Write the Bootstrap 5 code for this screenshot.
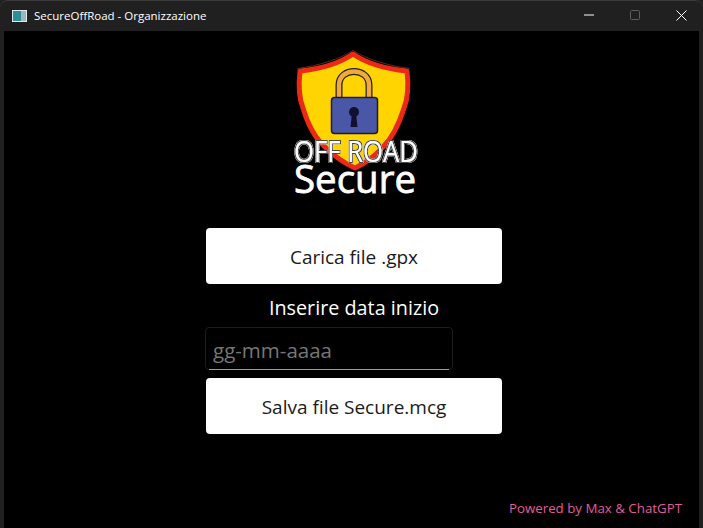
<!DOCTYPE html>
<html lang="it">
<head>
<meta charset="utf-8">
<title>SecureOffRoad - Organizzazione</title>
<link href="https://cdn.jsdelivr.net/npm/bootstrap@5.3.0/dist/css/bootstrap.min.css" rel="stylesheet">
<style>
html, body { height: 100%; }
body { background: #202020; font-family: "Open Sans", "Noto Sans", sans-serif; overflow: hidden; }
.win-shell { height: 528px; width: 703px; }
.title-strip { height: 31px; background: #202020; color: #fff; font-size: 11.5px; padding-left: 12px; border-top: 1px solid #3a3a3a; border-radius: 8px 8px 0 0; }
.app-glyph { width: 15px; height: 12px; margin-right: 7px; }
.caption-btn { width: 46px; height: 30px; padding-bottom: 2px; }
.caption-group { margin-right: -1px; }
.client-area { background: #000; margin: 0 4px 0 4px; height: 497px; position: relative; }
.logo-box { width: 134px; height: 158px; margin-top: 17px; margin-left: 11px; }
.logo-text { font-family: "Open Sans", sans-serif; fill: #fff; }
.logo-word { stroke: #fff; stroke-width: .8px; }
.action-btn { width: 296px; height: 56px; background: #fff; color: #1a1a1a; border: 0; border-radius: 4px; font-size: 19px; padding: 3px 0 0; }
.action-btn:hover { background: #fff; color: #1a1a1a; }
.field-label { color: #fff; font-size: 19.8px; line-height: 25px; margin-top: 11px; margin-bottom: 7px; }
.stack-col { width: 296px; margin-left: 202px; margin-top: 22px; }
.date-field.form-control { width: 248px; height: 43px; background: #000; color: #fff; border: 1px solid #1c1c1c; border-radius: 4px; font-size: 20.5px; padding: 3px 7px 0; margin-left: -1px; margin-bottom: 8px; font-family: inherit; box-shadow: none; }
.date-field.form-control::placeholder { color: #767676; opacity: 1; }
.field-wrap { position: relative; align-self: flex-start; }
.field-wrap::after { content: ""; position: absolute; left: 3px; right: 4px; bottom: 8px; height: 1px; background: #9a9a9a; }
.credit-line { color: #e25c9d; font-size: 13.3px; position: absolute; right: 17px; bottom: 11px; line-height: 18px; }
</style>
</head>
<body>
<div class="win-shell d-flex flex-column">
  <div class="title-strip d-flex align-items-center">
    <svg class="app-glyph" viewBox="0 0 15 12"><rect width="15" height="12" fill="#dfe8ec"/><rect x="1" y="1" width="8" height="10" fill="#2f8f96"/><rect x="9" y="1" width="5" height="10" fill="#9fb4bb"/></svg>
    <span>SecureOffRoad - Organizzazione</span>
    <div class="caption-group ms-auto d-flex">
      <div class="caption-btn d-flex align-items-center justify-content-center"><svg width="10" height="10" viewBox="0 0 10 10"><path d="M0 5h10" stroke="#fff" fill="none"/></svg></div>
      <div class="caption-btn d-flex align-items-center justify-content-center"><svg width="10" height="10" viewBox="0 0 10 10"><rect x=".5" y=".5" width="9" height="9" rx="1" stroke="#5c5c5c" fill="none"/></svg></div>
      <div class="caption-btn d-flex align-items-center justify-content-center"><svg width="11" height="11" viewBox="0 0 11 11"><path d="M.5.5l10 10M10.500.5l-10 10" stroke="#fff" fill="none"/></svg></div>
    </div>
  </div>
  <div class="client-area">
    <div class="d-flex justify-content-center">
      <svg class="logo-box" viewBox="0 0 134 158">
        <defs>
          <filter id="txtRim" x="-10%" y="-20%" width="120%" height="140%">
            <feMorphology in="SourceAlpha" operator="dilate" radius="0.5" result="a"/>
            <feFlood flood-color="#4a4a4a"/>
            <feComposite in2="a" operator="in" result="dark"/>
            <feMorphology in="SourceAlpha" operator="dilate" radius="1.3" result="b"/>
            <feFlood flood-color="#fff"/>
            <feComposite in2="b" operator="in" result="halo"/>
            <feMerge><feMergeNode in="halo"/><feMergeNode in="dark"/><feMergeNode in="SourceGraphic"/></feMerge>
          </filter>
        </defs>
        <path d="M63 6C50 15 30 21 10 23C8 40 9 50 13 60C18 77 25 90 35 99C44 108 54 115 65 120C76 115 84 109 93 99C103 89 109 76 114 60C118 50 119 40 117 23C97 21 76 15 63 6Z" fill="#ffd400" stroke="#ea2a16" stroke-width="5" stroke-linejoin="round"/>
        <path d="M63 2.500C50 11 28 18 7 20.500M63 2.500C76 11 99 18 120 20.500" fill="none" stroke="#5a2a18" stroke-width="1"/>
        <path d="M49 50V37C49 19 79 19 79 37V50" fill="none" stroke="#222" stroke-width="7"/>
        <path d="M49 50V37C49 19 79 19 79 37V50" fill="none" stroke="#f0a93b" stroke-width="4.500"/>
        <rect x="41.500" y="49.500" width="46" height="36" rx="3" fill="#4a56a6" stroke="#1c1c2c" stroke-width="1.500"/>
        <circle cx="64" cy="64" r="5" fill="#101030"/>
        <path d="M62 65h4l1.500 14h-7z" fill="#101030"/>
        <text class="logo-text" x="66" y="114" text-anchor="middle" font-size="29" textLength="124" lengthAdjust="spacingAndGlyphs" filter="url(#txtRim)">OFF ROAD</text>
        <text class="logo-text logo-word" x="65" y="145" text-anchor="middle" font-size="39" textLength="122" lengthAdjust="spacingAndGlyphs">Secure</text>
      </svg>
    </div>
    <div class="stack-col d-flex flex-column align-items-center">
      <button type="button" class="btn action-btn">Carica file .gpx</button>
      <div class="field-label">Inserire data inizio</div>
      <div class="field-wrap">
        <input type="text" class="form-control date-field" placeholder="gg-mm-aaaa">
      </div>
      <button type="button" class="btn action-btn">Salva file Secure.mcg</button>
    </div>
    <div class="credit-line">Powered by Max &amp; ChatGPT</div>
  </div>
</div>
</body>
</html>
